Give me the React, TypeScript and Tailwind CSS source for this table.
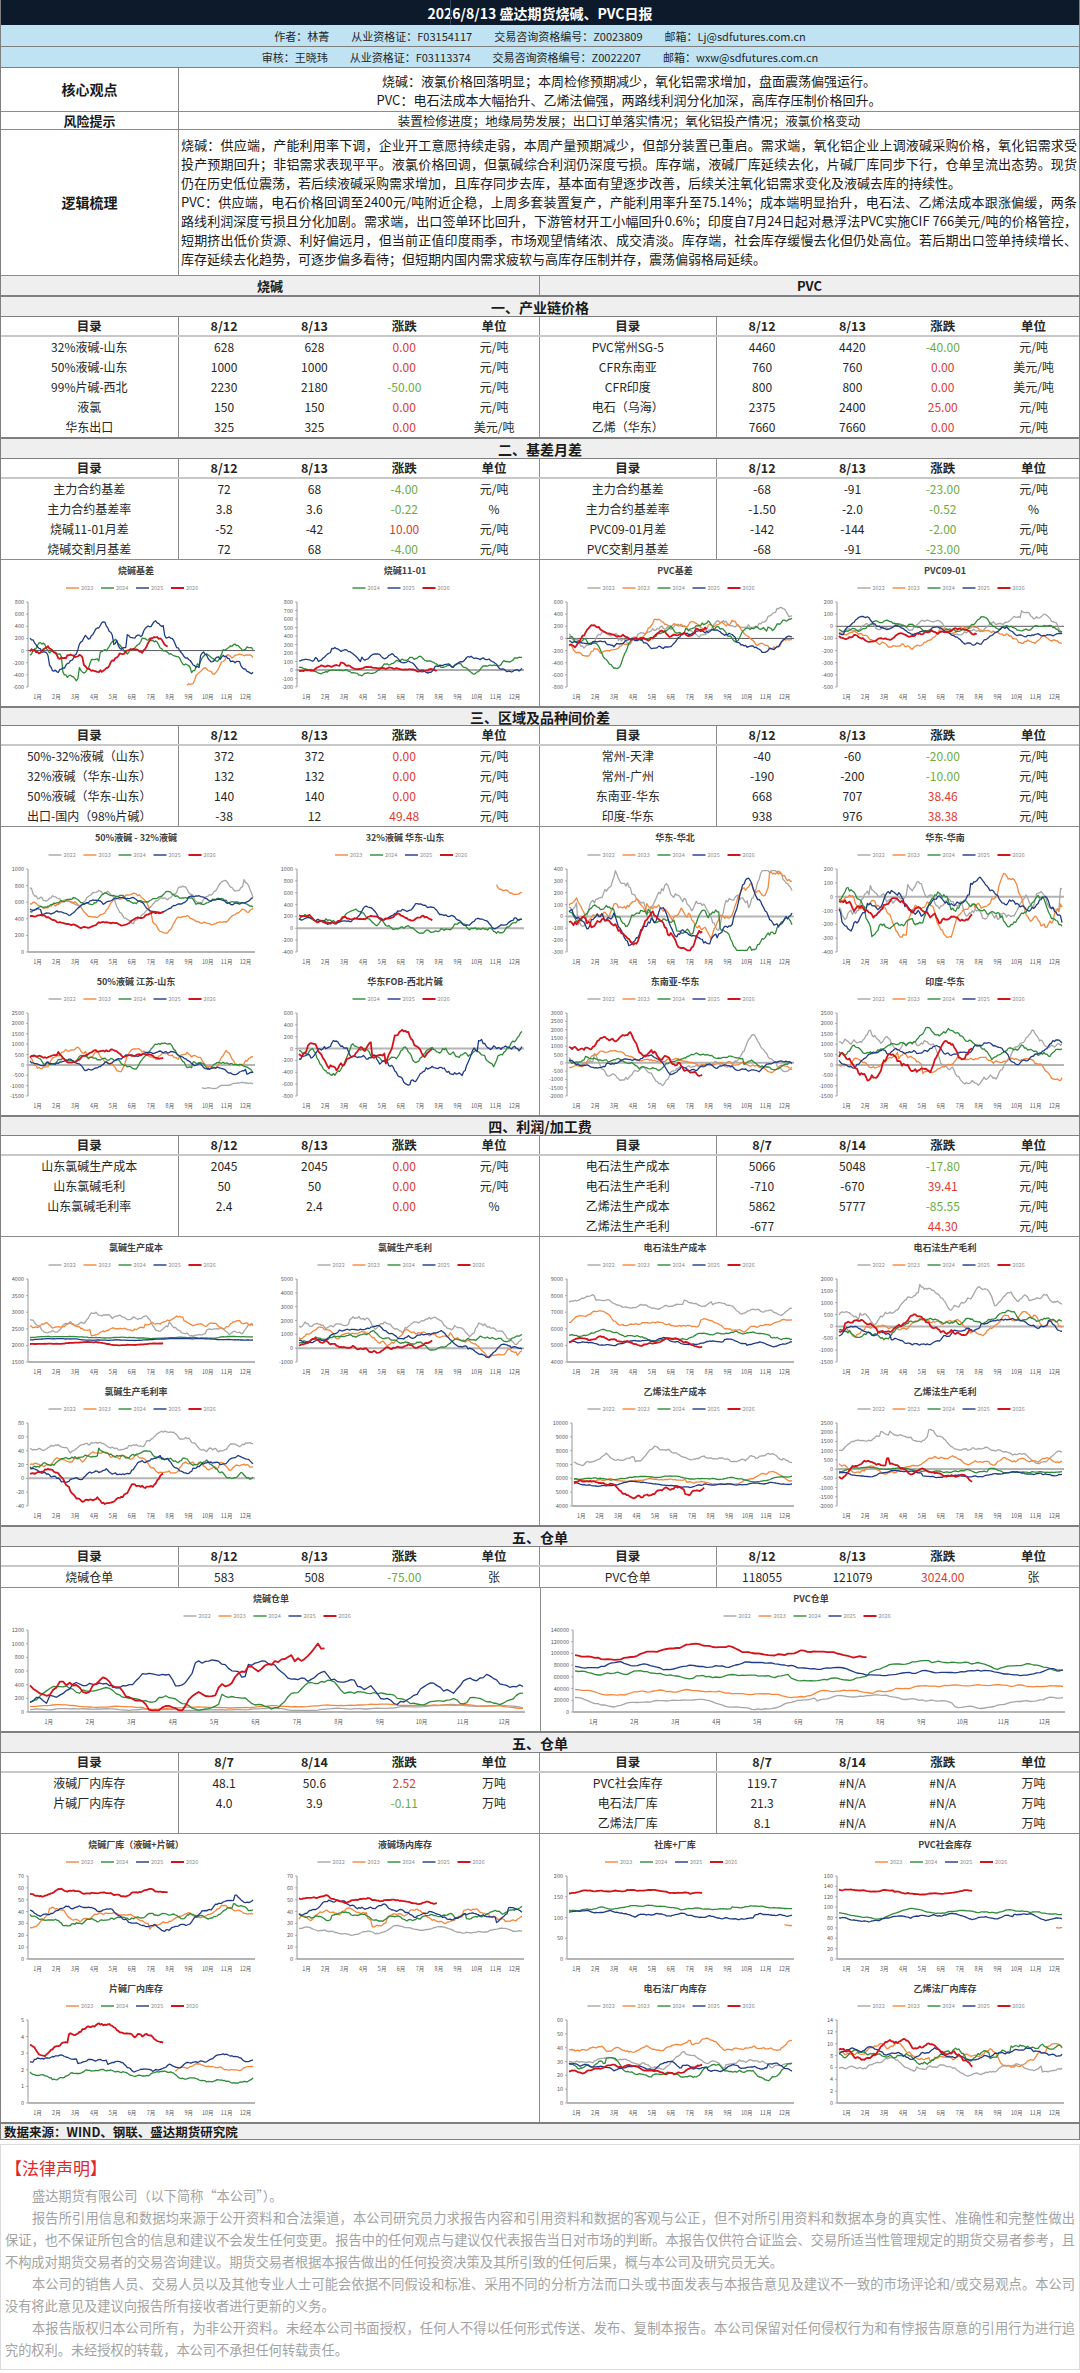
import React from 'react'

const COLORS: Record<number, string> = {
  2022: '#a6a6a6',
  2023: '#f5873d',
  2024: '#2e8b37',
  2025: '#1f3a87',
  2026: '#d3121b',
}

const MONTHS = ['1月', '2月', '3月', '4月', '5月', '6月', '7月', '8月', '9月', '10月', '11月', '12月']

// year, center (0..1 of plot height), volatility, end, start
type Series = [number, number, number, number?, number?]
type ChartDef = { t: string; y: (string | number)[]; z?: number; s: Series[] }

function rng(seed: number) {
  let a = seed >>> 0
  return () => {
    a = (a + 0x6d2b79f5) | 0
    let t = Math.imul(a ^ (a >>> 15), 1 | a)
    t = (t + Math.imul(t ^ (t >>> 7), 61 | t)) ^ t
    return ((t ^ (t >>> 14)) >>> 0) / 4294967296
  }
}

function walk(seed: number, n: number, c: number, vol: number) {
  const r = rng(seed)
  let v = c + (r() - 0.5) * vol * 3
  let m = 0
  const out: number[] = []
  for (let i = 0; i < n; i++) {
    m = m * 0.75 + (r() - 0.5) * vol * 0.7
    v += m + (r() - 0.5) * vol * 0.8 + (c - v) * 0.05
    if (r() < 0.015) v += (r() - 0.5) * vol * 5
    v = Math.min(0.98, Math.max(0.02, v))
    out.push(v)
  }
  return out
}

function Chart({ def, seed, w = 270, h = 144, dark }: { def: ChartDef; seed: number; w?: number; h?: number; dark?: boolean }) {
  const { t, y, z, s } = def
  const L = String(y[0]).length > 4 ? 32 : 27
  const R = w - 16
  const T = 42
  const B = h - 19
  const step = (B - T) / (y.length - 1)
  const zeroY = z === undefined ? B : T + z * step
  const lw = 35
  const lx = w / 2 - (s.length * lw) / 2
  const N = 150
  return (
    <svg width={w} height={h} className="block">
      <text x={w / 2} y={14} textAnchor="middle" fontSize="9" fontWeight="700" fill="#404040">{t}</text>
      {s.map(([yr], i) => (
        <g key={yr}>
          <line x1={lx + i * lw} x2={lx + i * lw + 13} y1={28} y2={28} stroke={COLORS[yr]} strokeWidth={yr === 2026 ? 2 : 1.4} />
          <text x={lx + i * lw + 15} y={30} fontSize="5.5" fill="#8c8c8c">{yr}</text>
        </g>
      ))}
      {y.map((v, i) => (
        <text key={i} x={L - 4} y={T + i * step + 2} textAnchor="end" fontSize="5.5" fill="#595959">{v}</text>
      ))}
      <line x1={L} x2={L} y1={T} y2={B} stroke="#7f7f7f" strokeWidth="0.8" />
      {y.map((_, i) => (
        <line key={i} x1={L - 2} x2={L} y1={T + i * step} y2={T + i * step} stroke="#7f7f7f" strokeWidth="0.6" />
      ))}
      <line x1={L} x2={R} y1={zeroY} y2={zeroY} stroke={dark ? '#595959' : '#b4b4b4'} strokeWidth={dark ? 1 : 2} />
      {s.map(([yr, c, vol, end = 1, start = 0], k) => {
        const pts = walk(seed * 31 + k * 7 + yr, N, c, vol)
        const i0 = Math.floor(start * N)
        const i1 = Math.floor(end * N)
        const d = pts
          .slice(i0, i1)
          .map((v, j) => `${(L + 2 + ((i0 + j) / (N - 1)) * (R - L - 4)).toFixed(1)},${(B - v * (B - T)).toFixed(1)}`)
          .join(' ')
        return <polyline key={yr} points={d} fill="none" stroke={COLORS[yr]} strokeWidth={yr === 2026 ? 1.8 : 1.3} strokeLinejoin="round" />
      })}
      {MONTHS.map((m, i) => (
        <text key={m} x={L + (i + 0.5) * ((R - L) / 12)} y={h - 7} textAnchor="middle" fontSize="5.5" fill="#595959">{m}</text>
      ))}
    </svg>
  )
}

const W = [
  'w-[178px] border-r',
  'w-[91px]',
  'w-[90px]',
  'w-[90px]',
  'w-[91px] border-r',
  'w-[177px] border-r',
  'w-[91px]',
  'w-[90px]',
  'w-[91px]',
  'w-[91px]',
]

function Row({ cells, head }: { cells: string[]; head?: boolean }) {
  return (
    <div className={`flex h-[20px] ${head ? 'font-bold text-[12.5px] border-b-2 border-[#c8c8c8]' : 'text-[12px]'}`}>
      {cells.map((v, i) => {
        let color = 'text-[#262626]'
        if (!head && (i === 3 || i === 8)) {
          if (v.startsWith('-')) color = 'text-[#6aad3d]'
          else if (/^\d/.test(v)) color = 'text-[#e0392f]'
        }
        return (
          <div key={i} className={`${W[i]} border-[#8c8c8c] h-full flex items-center justify-center whitespace-nowrap leading-[20px] ${color}`}>
            {v}
          </div>
        )
      })}
    </div>
  )
}

function Title({ text, h = 'h-[22px]' }: { text: string; h?: string }) {
  return (
    <div className={`${h} bg-[#efefef] border-t-2 border-b border-[#7f7f7f] flex items-center justify-center font-bold text-[14px] leading-[18px] text-[#1a1a1a]`}>
      {text}
    </div>
  )
}

function Table({ title, dates, rows, th }: { title: string; dates: string[]; rows: string[][]; th?: string }) {
  return (
    <div>
      <Title text={title} h={th} />
      <Row head cells={['目录', dates[0], dates[1], '涨跌', '单位', '目录', dates[2], dates[3], '涨跌', '单位']} />
      {rows.map((r, i) => (
        <Row key={i} cells={r} />
      ))}
    </div>
  )
}

function Charts({ defs, seed, h = 144, dark }: { defs: (ChartDef | null)[]; seed: number; h?: number; dark?: boolean }) {
  const left = defs.length > 4 ? [defs[0], defs[1], defs[4], defs[5]] : [defs[0], defs[1]]
  const right = defs.length > 4 ? [defs[2], defs[3], defs[6], defs[7]] : [defs[2], defs[3]]
  const cell = (d: ChartDef | null, i: number, off: number) => (
    <div key={i} style={{ height: h }}>
      {d && <Chart def={d} seed={seed + off + i} h={h} dark={dark} />}
    </div>
  )
  return (
    <div className="flex">
      <div className="w-[540px] border-r border-[#8c8c8c] grid grid-cols-2">{left.map((d, i) => cell(d, i, 0))}</div>
      <div className="w-[540px] grid grid-cols-2">{right.map((d, i) => cell(d, i, 10))}</div>
    </div>
  )
}

const basis: ChartDef[] = [
  { t: '烧碱基差', y: [800, 600, 400, 200, 0, -200, -400, -600], z: 4, s: [[2023, 0.4, 0.05, 1, 0.7], [2024, 0.45, 0.06], [2025, 0.55, 0.06], [2026, 0.45, 0.05, 0.62]] },
  { t: '烧碱11-01', y: [800, 700, 600, 500, 400, 300, 200, 100, 0, -100, -200], z: 8, s: [[2024, 0.27, 0.03], [2025, 0.26, 0.035], [2026, 0.18, 0.02, 0.62]] },
  { t: 'PVC基差', y: [600, 400, 200, 0, -200, -400, -600, -800], z: 3, s: [[2022, 0.62, 0.06], [2023, 0.55, 0.05], [2024, 0.6, 0.05], [2025, 0.55, 0.04], [2026, 0.5, 0.04, 0.62]] },
  { t: 'PVC09-01', y: [200, 100, 0, -100, -200, -300, -400, -500], z: 2, s: [[2022, 0.66, 0.04], [2023, 0.62, 0.04], [2024, 0.68, 0.03], [2025, 0.64, 0.03], [2026, 0.6, 0.03, 0.62]] },
]

const spread: ChartDef[] = [
  { t: '50%液碱 - 32%液碱', y: [1000, 800, 600, 400, 200, 0], s: [[2022, 0.7, 0.05], [2023, 0.55, 0.04], [2024, 0.5, 0.035], [2025, 0.52, 0.03], [2026, 0.42, 0.025, 0.6]] },
  { t: '32%液碱 华东-山东', y: [1000, 800, 600, 400, 200, 0, -200, -400], z: 5, s: [[2023, 0.7, 0.03, 1, 0.88], [2024, 0.45, 0.045], [2025, 0.4, 0.035], [2026, 0.45, 0.03, 0.6]] },
  { t: '华东-华北', y: [400, 300, 200, 100, 0, -100, -200, -300], z: 4, s: [[2022, 0.55, 0.1], [2023, 0.55, 0.09], [2024, 0.45, 0.08], [2025, 0.5, 0.08], [2026, 0.38, 0.08, 0.6]] },
  { t: '华东-华南', y: [200, 100, 0, -100, -200, -300, -400], z: 2, s: [[2022, 0.6, 0.09], [2023, 0.6, 0.09], [2024, 0.55, 0.07], [2025, 0.55, 0.07], [2026, 0.5, 0.07, 0.6]] },
  { t: '50%液碱 江苏-山东', y: [2500, 2000, 1500, 1000, 500, 0, -500, -1000, -1500], z: 5, s: [[2022, 0.15, 0.02, 1, 0.77], [2023, 0.5, 0.05], [2024, 0.42, 0.04], [2025, 0.4, 0.03], [2026, 0.42, 0.03, 0.6]] },
  { t: '华东FOB-西北片碱', y: [600, 400, 200, 0, -200, -400, -600, -800], z: 3, s: [[2024, 0.55, 0.06], [2025, 0.4, 0.06], [2026, 0.55, 0.07, 0.6]] },
  { t: '东南亚-华东', y: [3000, 2500, 2000, 1500, 1000, 500, 0, -500, -1000, -1500, -2000], z: 6, s: [[2022, 0.42, 0.05], [2023, 0.38, 0.03], [2024, 0.42, 0.03], [2025, 0.42, 0.03], [2026, 0.55, 0.06, 0.6]] },
  { t: '印度-华东', y: [2500, 2000, 1500, 1000, 500, 0, -500, -1000, -1500], z: 5, s: [[2022, 0.6, 0.07], [2023, 0.4, 0.04], [2024, 0.5, 0.05], [2025, 0.47, 0.04], [2026, 0.55, 0.07, 0.6]] },
]

const profit: (ChartDef | null)[] = [
  { t: '氯碱生产成本', y: [4000, 3500, 3000, 2500, 2000, 1500], s: [[2022, 0.55, 0.04], [2023, 0.4, 0.03], [2024, 0.3, 0.004], [2025, 0.27, 0.004], [2026, 0.22, 0.005, 0.6]] },
  { t: '氯碱生产毛利', y: [5000, 4000, 3000, 2000, 1000, 0, -1000], z: 5, s: [[2022, 0.45, 0.05], [2023, 0.27, 0.04], [2024, 0.27, 0.03], [2025, 0.25, 0.03], [2026, 0.22, 0.03, 0.6]] },
  { t: '电石法生产成本', y: [9000, 8000, 7000, 6000, 5000, 4000], s: [[2022, 0.75, 0.025], [2023, 0.45, 0.025], [2024, 0.33, 0.02], [2025, 0.24, 0.015], [2026, 0.23, 0.02, 0.6]] },
  { t: '电石法生产毛利', y: [2000, 1500, 1000, 500, 0, -500, -1000, -1500], z: 4, s: [[2022, 0.6, 0.05], [2023, 0.4, 0.04], [2024, 0.42, 0.04], [2025, 0.32, 0.03], [2026, 0.35, 0.04, 0.6]] },
  { t: '氯碱生产毛利率', y: [80, 60, 40, 20, 0, -20, -40], z: 4, s: [[2022, 0.7, 0.04], [2023, 0.5, 0.04], [2024, 0.47, 0.04], [2025, 0.47, 0.04], [2026, 0.38, 0.05, 0.6]] },
  null,
  { t: '乙烯法生产成本', y: [10000, 9000, 8000, 7000, 6000, 5000, 4000], s: [[2022, 0.5, 0.03], [2023, 0.33, 0.015], [2024, 0.33, 0.01], [2025, 0.28, 0.01], [2026, 0.3, 0.03, 0.6]] },
  { t: '乙烯法生产毛利', y: [2500, 2000, 1500, 1000, 500, 0, -500, -1000, -1500, -2000], z: 5, s: [[2022, 0.7, 0.03], [2023, 0.5, 0.03], [2024, 0.43, 0.015], [2025, 0.38, 0.015], [2026, 0.37, 0.03, 0.6]] },
]

const stock: (ChartDef | null)[] = [
  { t: '烧碱厂库（液碱+片碱）', y: [70, 60, 50, 40, 30, 20, 10, 0], s: [[2023, 0.5, 0.03], [2024, 0.5, 0.03], [2025, 0.6, 0.03], [2026, 0.78, 0.02, 0.62]] },
  { t: '液碱场内库存', y: [70, 60, 50, 40, 30, 20, 10, 0], s: [[2022, 0.37, 0.015], [2023, 0.5, 0.03], [2024, 0.53, 0.03], [2025, 0.58, 0.03], [2026, 0.72, 0.02, 0.62]] },
  { t: '社库+厂库', y: [200, 150, 100, 50, 0], s: [[2023, 0.45, 0.01, 1, 0.96], [2024, 0.6, 0.01], [2025, 0.57, 0.015], [2026, 0.8, 0.01, 0.6]] },
  { t: 'PVC社会库存', y: [160, 140, 120, 100, 80, 60, 40, 20, 0], s: [[2023, 0.35, 0.01, 1, 0.97], [2024, 0.55, 0.01], [2025, 0.5, 0.015], [2026, 0.82, 0.01, 0.6]] },
  { t: '片碱厂内库存', y: [5, 4, 3, 2, 1, 0], s: [[2023, 0.4, 0.02, 1, 0.65], [2024, 0.38, 0.02], [2025, 0.5, 0.025], [2026, 0.68, 0.04, 0.6]] },
  null,
  { t: '电石法厂内库存', y: [60, 50, 40, 30, 20, 10, 0], s: [[2022, 0.5, 0.03], [2023, 0.65, 0.03], [2024, 0.45, 0.03], [2025, 0.45, 0.02], [2026, 0.4, 0.02, 0.6]] },
  { t: '乙烯法厂内库存', y: [14, 12, 10, 8, 6, 4, 2, 0], s: [[2022, 0.45, 0.03], [2023, 0.6, 0.04], [2024, 0.62, 0.04], [2025, 0.6, 0.03], [2026, 0.62, 0.04, 0.6]] },
]

const warrantA: ChartDef = { t: '烧碱仓单', y: [1200, 1000, 800, 600, 400, 200, 0], s: [[2022, 0.04, 0.01], [2023, 0.05, 0.01], [2024, 0.15, 0.06], [2025, 0.2, 0.08], [2026, 0.35, 0.1, 0.6]] }
const warrantB: ChartDef = { t: 'PVC仓单', y: [140000, 120000, 100000, 80000, 60000, 40000, 20000, 0], s: [[2022, 0.15, 0.02], [2023, 0.25, 0.02], [2024, 0.55, 0.03], [2025, 0.55, 0.03], [2026, 0.7, 0.03, 0.6]] }

// [text, fills the full line]
const logic: [string, boolean][] = [
  ['烧碱：供应端，产能利用率下调，企业开工意愿持续走弱，本周产量预期减少，但部分装置已重启。需求端，氧化铝企业上调液碱采购价格，氧化铝需求受', true],
  ['投产预期回升；非铝需求表现平平。液氯价格回调，但氯碱综合利润仍深度亏损。库存端，液碱厂库延续去化，片碱厂库同步下行，仓单呈流出态势。现货', true],
  ['仍在历史低位震荡，若后续液碱采购需求增加，且库存同步去库，基本面有望逐步改善，后续关注氧化铝需求变化及液碱去库的持续性。', false],
  ['PVC：供应端，电石价格回调至2400元/吨附近企稳，上周多套装置复产，产能利用率升至75.14%；成本端明显抬升，电石法、乙烯法成本跟涨偏缓，两条', true],
  ['路线利润深度亏损且分化加剧。需求端，出口签单环比回升，下游管材开工小幅回升0.6%；印度自7月24日起对悬浮法PVC实施CIF 766美元/吨的价格管控，', true],
  ['短期挤出低价货源、利好偏远月，但当前正值印度雨季，市场观望情绪浓、成交清淡。库存端，社会库存缓慢去化但仍处高位。若后期出口签单持续增长、', true],
  ['库存延续去化趋势，可逐步偏多看待；但短期内国内需求疲软与高库存压制并存，震荡偏弱格局延续。', false],
]

// [text, indent, full line]
const legal: [string, boolean, boolean][] = [
  ['盛达期货有限公司（以下简称“本公司”）。', true, false],
  ['报告所引用信息和数据均来源于公开资料和合法渠道，本公司研究员力求报告内容和引用资料和数据的客观与公正，但不对所引用资料和数据本身的真实性、准确性和完整性做出', true, true],
  ['保证，也不保证所包含的信息和建议不会发生任何变更。报告中的任何观点与建议仅代表报告当日对市场的判断。本报告仅供符合证监会、交易所适当性管理规定的期货交易者参考，且', false, true],
  ['不构成对期货交易者的交易咨询建议。期货交易者根据本报告做出的任何投资决策及其所引致的任何后果，概与本公司及研究员无关。', false, false],
  ['本公司的销售人员、交易人员以及其他专业人士可能会依据不同假设和标准、采用不同的分析方法而口头或书面发表与本报告意见及建议不一致的市场评论和/或交易观点。本公司', true, true],
  ['没有将此意见及建议向报告所有接收者进行更新的义务。', false, false],
  ['本报告版权归本公司所有，为非公开资料。未经本公司书面授权，任何人不得以任何形式传送、发布、复制本报告。本公司保留对任何侵权行为和有悖报告原意的引用行为进行追', true, true],
  ['究的权利。未经授权的转载，本公司不承担任何转载责任。', false, false],
]

export default function App() {
  return (
    <div className="w-[1080px] min-h-[2373px] bg-white font-['Noto_Sans_CJK_SC','Noto_Sans',sans-serif] text-[#1a1a1a]">
      <div className="border-x border-[#7f7f7f]">
        {/* header */}
        <div className="relative h-[25px] bg-[#0c1a2c] flex items-center justify-center text-white font-bold text-[14px] leading-[20px]">
          <span className="absolute left-[449px] top-0 h-full w-px bg-[#33475e]" />
          2026/8/13 盛达期货烧碱、PVC日报
        </div>
        <div className="h-[22px] bg-[#bfe3f3] border-b border-[#7f7f7f] flex items-center justify-center gap-[22px] text-[11px] leading-[16px] text-[#262626]">
          <span>作者：林菁</span>
          <span>从业资格证：F03154117</span>
          <span>交易咨询资格编号：Z0023809</span>
          <span>邮箱：Lj@sdfutures.com.cn</span>
        </div>
        <div className="h-[21px] bg-[#bfe3f3] border-b border-[#7f7f7f] flex items-center justify-center gap-[22px] text-[11px] leading-[16px] text-[#262626]">
          <span>审核：王晓玮</span>
          <span>从业资格证：F03113374</span>
          <span>交易咨询资格编号：Z0022207</span>
          <span>邮箱：wxw@sdfutures.com.cn</span>
        </div>

        <div className="flex h-[44px] border-b border-[#8c8c8c]">
          <div className="w-[178px] border-r border-[#8c8c8c] flex items-center justify-center font-bold text-[14px]">核心观点</div>
          <div className="flex-1 flex flex-col items-center justify-center text-[13px] leading-[19px]">
            <div>烧碱：液氯价格回落明显；本周检修预期减少，氧化铝需求增加，盘面震荡偏强运行。</div>
            <div>PVC：电石法成本大幅抬升、乙烯法偏强，两路线利润分化加深，高库存压制价格回升。</div>
          </div>
        </div>
        <div className="flex h-[18px] border-b border-[#8c8c8c]">
          <div className="w-[178px] border-r border-[#8c8c8c] flex items-center justify-center font-bold text-[13px] leading-[17px]">风险提示</div>
          <div className="flex-1 flex items-center justify-center text-[12.5px] leading-[17px]">
            装置检修进度；地缘局势发展；出口订单落实情况；氧化铝投产情况；液氯价格变动
          </div>
        </div>
        <div className="flex h-[145px]">
          <div className="w-[178px] border-r border-[#8c8c8c] flex items-center justify-center font-bold text-[14px]">逻辑梳理</div>
          <div className="w-[900px] px-[2px] pt-[5px] text-[13px] leading-[19px]">
            {logic.map(([line, full], i) => (
              <div key={i} className={`whitespace-nowrap ${full ? 'text-justify [text-align-last:justify]' : ''}`}>
                {line}
              </div>
            ))}
          </div>
        </div>

        <div className="flex h-[20px] bg-[#efefef] border-t border-[#8c8c8c] font-bold text-[13px]">
          <div className="w-[540px] border-r border-[#8c8c8c] flex items-center justify-center">烧碱</div>
          <div className="w-[540px] flex items-center justify-center">PVC</div>
        </div>

        <Table
          title="一、产业链价格"
          dates={['8/12', '8/13', '8/12', '8/13']}
          rows={[
            ['32%液碱-山东', '628', '628', '0.00', '元/吨', 'PVC常州SG-5', '4460', '4420', '-40.00', '元/吨'],
            ['50%液碱-山东', '1000', '1000', '0.00', '元/吨', 'CFR东南亚', '760', '760', '0.00', '美元/吨'],
            ['99%片碱-西北', '2230', '2180', '-50.00', '元/吨', 'CFR印度', '800', '800', '0.00', '美元/吨'],
            ['液氯', '150', '150', '0.00', '元/吨', '电石（乌海）', '2375', '2400', '25.00', '元/吨'],
            ['华东出口', '325', '325', '0.00', '美元/吨', '乙烯（华东）', '7660', '7660', '0.00', '元/吨'],
          ]}
        />
        <Table
          title="二、基差月差"
          dates={['8/12', '8/13', '8/12', '8/13']}
          rows={[
            ['主力合约基差', '72', '68', '-4.00', '元/吨', '主力合约基差', '-68', '-91', '-23.00', '元/吨'],
            ['主力合约基差率', '3.8', '3.6', '-0.22', '%', '主力合约基差率', '-1.50', '-2.0', '-0.52', '%'],
            ['烧碱11-01月差', '-52', '-42', '10.00', '元/吨', 'PVC09-01月差', '-142', '-144', '-2.00', '元/吨'],
            ['烧碱交割月基差', '72', '68', '-4.00', '元/吨', 'PVC交割月基差', '-68', '-91', '-23.00', '元/吨'],
          ]}
        />
        <div className="border-t border-[#8c8c8c]">
          <Charts defs={basis} seed={1} h={146} dark />
        </div>

        <Table
          title="三、区域及品种间价差"
          th="h-[20px]"
          dates={['8/12', '8/13', '8/12', '8/13']}
          rows={[
            ['50%-32%液碱（山东）', '372', '372', '0.00', '元/吨', '常州-天津', '-40', '-60', '-20.00', '元/吨'],
            ['32%液碱（华东-山东）', '132', '132', '0.00', '元/吨', '常州-广州', '-190', '-200', '-10.00', '元/吨'],
            ['50%液碱（华东-山东）', '140', '140', '0.00', '元/吨', '东南亚-华东', '668', '707', '38.46', '元/吨'],
            ['出口-国内（98%片碱）', '-38', '12', '49.48', '元/吨', '印度-华东', '938', '976', '38.38', '元/吨'],
          ]}
        />
        <div className="border-t border-[#8c8c8c]">
          <Charts defs={spread} seed={20} />
        </div>

        <Table
          title="四、利润/加工费"
          th="h-[21px]"
          dates={['8/12', '8/13', '8/7', '8/14']}
          rows={[
            ['山东氯碱生产成本', '2045', '2045', '0.00', '元/吨', '电石法生产成本', '5066', '5048', '-17.80', '元/吨'],
            ['山东氯碱毛利', '50', '50', '0.00', '元/吨', '电石法生产毛利', '-710', '-670', '39.41', '元/吨'],
            ['山东氯碱毛利率', '2.4', '2.4', '0.00', '%', '乙烯法生产成本', '5862', '5777', '-85.55', '元/吨'],
            ['', '', '', '', '', '乙烯法生产毛利', '-677', '', '44.30', '元/吨'],
          ]}
        />
        <div className="border-t border-[#8c8c8c]">
          <Charts defs={profit} seed={40} />
        </div>

        <Table
          title="五、仓单"
          dates={['8/12', '8/13', '8/12', '8/13']}
          rows={[['烧碱仓单', '583', '508', '-75.00', '张', 'PVC仓单', '118055', '121079', '3024.00', '张']]}
        />
        <div className="flex border-t border-[#8c8c8c]">
          <div className="w-[540px] border-r border-[#8c8c8c]">
            <Chart def={warrantA} seed={60} w={540} h={143} />
          </div>
          <div className="w-[540px]">
            <Chart def={warrantB} seed={61} w={540} h={143} />
          </div>
        </div>

        <Table
          title="五、仓单"
          dates={['8/7', '8/14', '8/7', '8/14']}
          rows={[
            ['液碱厂内库存', '48.1', '50.6', '2.52', '万吨', 'PVC社会库存', '119.7', '#N/A', '#N/A', '万吨'],
            ['片碱厂内库存', '4.0', '3.9', '-0.11', '万吨', '电石法厂库', '21.3', '#N/A', '#N/A', '万吨'],
            ['', '', '', '', '', '乙烯法厂库', '8.1', '#N/A', '#N/A', '万吨'],
          ]}
        />
        <div className="border-t border-[#8c8c8c]">
          <Charts defs={stock} seed={80} />
        </div>

        <div className="h-[18px] bg-[#efefef] border-t-2 border-b border-[#7f7f7f] flex items-center px-[3px] font-bold text-[12.5px] leading-[15px]">
          数据来源：WIND、钢联、盛达期货研究院
        </div>
      </div>

      {/* legal */}
      <div className="mt-[4px] h-[226px] border border-[#dcdcdc] px-[4px] pt-[12px] text-[#a3a3a3]">
        <div className="text-[17px] leading-[22px] text-[#e3262b]">【法律声明】</div>
        <div className="mt-[6px] text-[13.2px] leading-[22px]">
          {legal.map(([line, indent, full], i) => (
            <div key={i} className={`whitespace-nowrap ${indent ? 'pl-[27px]' : ''} ${full ? 'text-justify [text-align-last:justify]' : ''}`}>
              {line}
            </div>
          ))}
        </div>
      </div>
    </div>
  )
}
